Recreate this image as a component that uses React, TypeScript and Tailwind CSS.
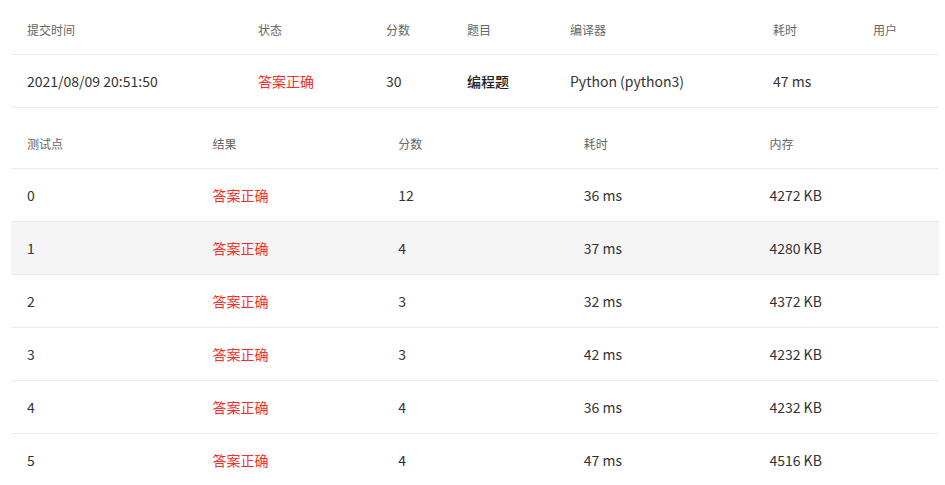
import React from "react";

const font = { fontFamily: '"Noto Sans CJK SC", sans-serif' };

const subCols = ["w-[231px]", "w-[128px]", "w-[81px]", "w-[103px]", "w-[203px]", "w-[100px]", "flex-1"];

const tests = [
  ["0", "12", "36 ms", "4272 KB"],
  ["1", "4", "37 ms", "4280 KB"],
  ["2", "3", "32 ms", "4372 KB"],
  ["3", "3", "42 ms", "4232 KB"],
  ["4", "4", "36 ms", "4232 KB"],
  ["5", "4", "47 ms", "4516 KB"],
];

export default function App() {
  const headers1 = ["提交时间", "状态", "分数", "题目", "编译器", "耗时", "用户"];
  return (
    <div className="w-[945px] h-[485px] bg-white overflow-hidden" style={font}>
      <div className="mx-[11px] w-[928px]">
        {/* table 1 */}
        <div className="flex h-[55px] border-b border-[#ebebeb] items-center pt-[6px] text-[12px] text-[#666]">
          {headers1.map((h, i) => (
            <div key={i} className={`${subCols[i]} px-4 shrink-0`}>{h}</div>
          ))}
        </div>
        <div className="flex h-[53px] border-b border-[#ebebeb] items-center text-[14px] text-[#333]">
          <div className={`${subCols[0]} px-4 shrink-0`}>2021/08/09 20:51:50</div>
          <div className={`${subCols[1]} px-4 shrink-0 text-[#f5302a]`}>答案正确</div>
          <div className={`${subCols[2]} px-4 shrink-0`}>30</div>
          <div className={`${subCols[3]} px-4 shrink-0 font-medium text-[#222]`}>编程题</div>
          <div className={`${subCols[4]} px-4 shrink-0`}>Python (python3)</div>
          <div className={`${subCols[5]} px-4 shrink-0`}>47 ms</div>
          <div className={`${subCols[6]} px-4`}></div>
        </div>
        {/* table 2 */}
        <div className="grid grid-cols-5 h-[61px] border-b border-[#ebebeb] items-center pt-[12px] text-[12px] text-[#666]">
          {["测试点", "结果", "分数", "耗时", "内存"].map((h) => (
            <div key={h} className="px-4">{h}</div>
          ))}
        </div>
        {tests.map((t, i) => (
          <div
            key={t[0]}
            className={`grid grid-cols-5 h-[53px] border-b border-[#ebebeb] items-center text-[14px] text-[#333] ${i === 1 ? "bg-[#f5f5f5]" : ""}`}
          >
            <div className="px-4">{t[0]}</div>
            <div className="px-4 text-[#f5302a]">答案正确</div>
            <div className="px-4">{t[1]}</div>
            <div className="px-4">{t[2]}</div>
            <div className="px-4">{t[3]}</div>
          </div>
        ))}
      </div>
    </div>
  );
}
